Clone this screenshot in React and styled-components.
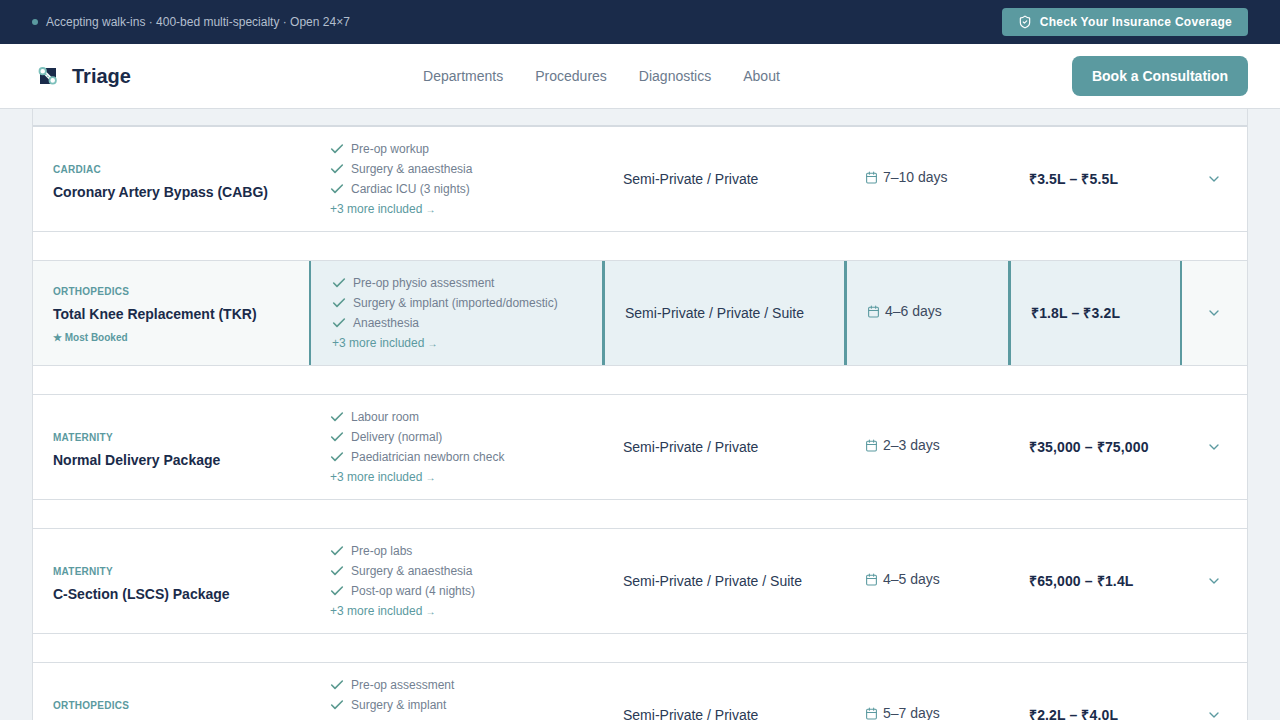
import React from 'react'
import styled, { createGlobalStyle } from 'styled-components'
import { Calendar, Check, ChevronDown, ShieldCheck } from 'lucide-react'

const Global = createGlobalStyle`
  html, body {
    margin: 0;
    padding: 0;
    height: 100%;
    overflow: hidden;
    background: #eef2f5;
  }
  * { box-sizing: border-box; }
`

const Page = styled.div`
  height: 720px;
  overflow: hidden;
  font-family: "Liberation Sans", Arial, sans-serif;
  color: #1a2b4a;
`

const TopBar = styled.div`
  height: 44px;
  padding: 0 32px;
  background: #1a2b4a;
  display: flex;
  align-items: center;
  justify-content: space-between;
`

const Status = styled.div`
  display: flex;
  align-items: center;
  gap: 8px;
  font-size: 12px;
  color: #b3bfce;
`

const Dot = styled.span`
  width: 6px;
  height: 6px;
  border-radius: 50%;
  background: #5b9aa0;
`

const InsuranceButton = styled.a`
  height: 28px;
  padding: 0 16px;
  display: flex;
  align-items: center;
  gap: 8px;
  border-radius: 4px;
  background: #5b9aa0;
  color: #fff;
  font-size: 12px;
  font-weight: 700;
  letter-spacing: 0.3px;
`

const Nav = styled.nav`
  height: 65px;
  padding: 0 32px;
  background: #fff;
  border-bottom: 1px solid #d9dee3;
  display: flex;
  align-items: center;
  justify-content: space-between;
`

const Brand = styled.div`
  display: flex;
  align-items: center;
  gap: 8px;
  font-size: 20px;
  font-weight: 700;
`

const Links = styled.div`
  display: flex;
  gap: 32px;
`

const NavLink = styled.a`
  font-size: 14px;
  color: #6b7a8d;
`

const BookButton = styled.a`
  height: 40px;
  width: 176px;
  display: flex;
  align-items: center;
  justify-content: center;
  border-radius: 8px;
  background: #5b9aa0;
  color: #fff;
  font-size: 14px;
  font-weight: 700;
`

const Table = styled.div`
  margin: 0 32px;
  background: #fff;
  border-left: 1px solid #d9dee3;
  border-right: 1px solid #d9dee3;
`

const HeadStrip = styled.div`
  height: 18px;
  background: #eef2f5;
  border-bottom: 2px solid #d5dbe1;
`

const Row = styled.div`
  display: grid;
  grid-template-columns: 277px 293px 242px 164px 172px 66px;
  height: 105px;
  border-bottom: 1px solid #d9dee3;
  background: ${p => (p.$featured ? '#f6f9f9' : '#fff')};
`

const Spacer = styled.div`
  height: 29px;
  border-bottom: 1px solid #d9dee3;
`

const Cell = styled.div`
  display: flex;
  flex-direction: column;
  justify-content: center;
  padding-left: 20px;
  ${p => p.$featured && `
    margin-left: -1px;
    background: #e8f1f4;
    border-left: 3px solid #5b9aa0;
  `}
`

const NameCell = styled.div`
  display: flex;
  flex-direction: column;
  justify-content: center;
  padding: ${p => (p.$featured ? '3px' : '5px')} 0 0 20px;
`

const ListCell = styled(Cell)`
  ${p => p.$featured && `
    border-left-width: 2px;
    padding-left: 21px;
  `}
`

const Department = styled.div`
  font-size: 10px;
  line-height: 14px;
  font-weight: 700;
  letter-spacing: 0.25px;
  color: #5b9aa0;
`

const Title = styled.div`
  margin-top: 6px;
  font-size: 14px;
  line-height: 18px;
  font-weight: 700;
`

const Badge = styled.div`
  margin-top: 8px;
  font-size: 10px;
  line-height: 14px;
  font-weight: 700;
  color: #5b9aa0;
`

const Items = styled.ul`
  list-style: none;
  margin: 0;
  padding: 0;
`

const Item = styled.li`
  display: flex;
  align-items: center;
  gap: 6px;
  height: 20px;
  font-size: 12px;
  color: #727f91;
  svg { color: #5b9a90; flex: none; margin-left: -1px; }
`

const More = styled.div`
  height: 20px;
  display: flex;
  align-items: center;
  gap: 3px;
  font-size: 12px;
  color: #5b9aa0;
  small { font-size: 10px; }
`

const RoomText = styled.div`
  font-size: 14px;
  color: #2a3a55;
`

const Days = styled.div`
  display: flex;
  align-items: center;
  gap: 5px;
  margin-bottom: 4px;
  font-size: 14px;
  color: #3c4a60;
  svg { color: #5b9aa0; }
`

const Price = styled.div`
  font-size: 14px;
  line-height: 18px;
  font-weight: 700;
  letter-spacing: 0.14px;
`

const ToggleCell = styled.div`
  display: flex;
  align-items: center;
  justify-content: center;
  padding-right: 1px;
  color: #5b9aa0;
  ${p => p.$featured && `
    margin-left: -1px;
    border-left: 2px solid #5b9aa0;
  `}
`

function LogoMark() {
  return (
    <svg width="32" height="32" viewBox="0 0 32 32" fill="none">
      <path d="M8 8h16v16H8z" fill="#1a2b4a" />
      <path d="M8 10.5V8h2.5L24 21.5V24h-2.5z" fill="#fff" />
      <path d="M13 13.5l5 5" stroke="#7cc0bb" strokeWidth="1.4" strokeDasharray="2 1" />
      <circle cx="10.7" cy="11.2" r="3.2" fill="#fff" stroke="#7cc0bb" strokeWidth="1.8" />
      <circle cx="20.7" cy="20.4" r="3.2" fill="#fff" stroke="#7cc0bb" strokeWidth="1.8" />
    </svg>
  )
}

const procedures = [
  {
    dept: 'CARDIAC',
    name: 'Coronary Artery Bypass (CABG)',
    items: ['Pre-op workup', 'Surgery & anaesthesia', 'Cardiac ICU (3 nights)'],
    room: 'Semi-Private / Private',
    days: '7–10 days',
    price: '₹3.5L – ₹5.5L',
  },
  {
    dept: 'ORTHOPEDICS',
    name: 'Total Knee Replacement (TKR)',
    items: ['Pre-op physio assessment', 'Surgery & implant (imported/domestic)', 'Anaesthesia'],
    room: 'Semi-Private / Private / Suite',
    days: '4–6 days',
    price: '₹1.8L – ₹3.2L',
    featured: true,
  },
  {
    dept: 'MATERNITY',
    name: 'Normal Delivery Package',
    items: ['Labour room', 'Delivery (normal)', 'Paediatrician newborn check'],
    room: 'Semi-Private / Private',
    days: '2–3 days',
    price: '₹35,000 – ₹75,000',
  },
  {
    dept: 'MATERNITY',
    name: 'C-Section (LSCS) Package',
    items: ['Pre-op labs', 'Surgery & anaesthesia', 'Post-op ward (4 nights)'],
    room: 'Semi-Private / Private / Suite',
    days: '4–5 days',
    price: '₹65,000 – ₹1.4L',
  },
  {
    dept: 'ORTHOPEDICS',
    name: 'Total Hip Replacement (THR)',
    items: ['Pre-op assessment', 'Surgery & implant', 'Anaesthesia'],
    room: 'Semi-Private / Private',
    days: '5–7 days',
    price: '₹2.2L – ₹4.0L',
  },
]

export default function App() {
  return (
    <Page>
      <Global />
      <TopBar>
        <Status>
          <Dot />
          Accepting walk-ins · 400-bed multi-specialty · Open 24×7
        </Status>
        <InsuranceButton>
          <ShieldCheck size={14} />
          Check Your Insurance Coverage
        </InsuranceButton>
      </TopBar>
      <Nav>
        <Brand>
          <LogoMark />
          Triage
        </Brand>
        <Links>
          <NavLink>Departments</NavLink>
          <NavLink>Procedures</NavLink>
          <NavLink>Diagnostics</NavLink>
          <NavLink>About</NavLink>
        </Links>
        <BookButton>Book a Consultation</BookButton>
      </Nav>
      <Table>
        <HeadStrip />
        {procedures.map(p => (
          <React.Fragment key={p.name}>
            <Row $featured={p.featured}>
              <NameCell $featured={p.featured}>
                <Department>{p.dept}</Department>
                <Title>{p.name}</Title>
                {p.featured && <Badge>★ Most Booked</Badge>}
              </NameCell>
              <ListCell $featured={p.featured}>
                <Items>
                  {p.items.map(item => (
                    <Item key={item}>
                      <Check size={16} strokeWidth={2.4} />
                      {item}
                    </Item>
                  ))}
                </Items>
                <More>
                  +3 more included <small>→</small>
                </More>
              </ListCell>
              <Cell $featured={p.featured}>
                <RoomText>{p.room}</RoomText>
              </Cell>
              <Cell $featured={p.featured}>
                <Days>
                  <Calendar size={13} />
                  {p.days}
                </Days>
              </Cell>
              <Cell $featured={p.featured}>
                <Price>{p.price}</Price>
              </Cell>
              <ToggleCell $featured={p.featured}>
                <ChevronDown size={16} />
              </ToggleCell>
            </Row>
            <Spacer />
          </React.Fragment>
        ))}
      </Table>
    </Page>
  )
}
